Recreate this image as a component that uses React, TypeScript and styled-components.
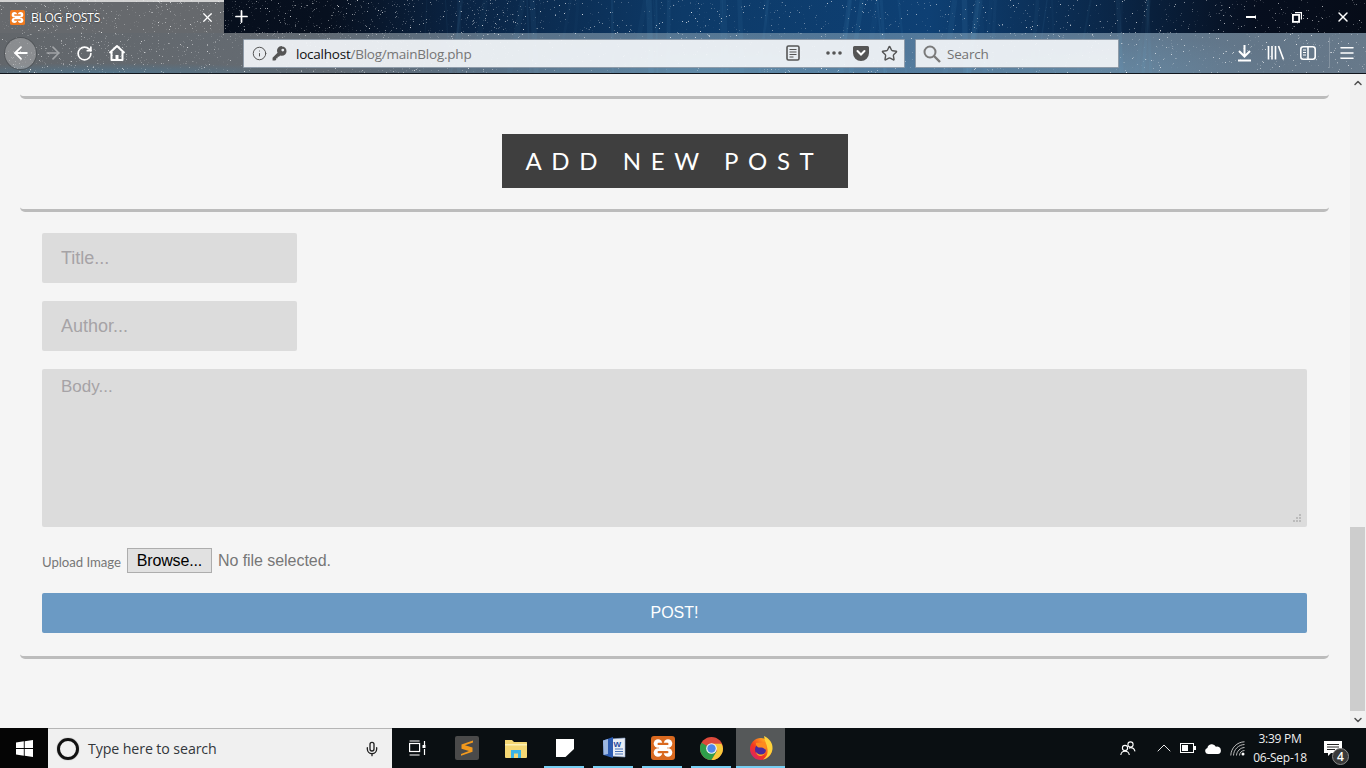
import React, { useMemo } from "react";
import styled, { createGlobalStyle } from "styled-components";
import { ArrowLeft, ArrowRight, RotateCw, X, Plus, Info, Star, Menu, Mic, ChevronUp, ChevronDown } from "lucide-react";

const Global = createGlobalStyle`
  html, body { margin: 0; padding: 0; width: 100%; height: 100%; overflow: hidden; background: #f5f5f5; }
  #root { width: 1366px; height: 768px; }
  * { box-sizing: border-box; }
`;

const Screen = styled.div`
  width: 1366px; height: 768px; display: flex; flex-direction: column; overflow: hidden;
`;
const Frame = styled.header`
  position: relative; height: 74px; flex: none; display: flex; flex-direction: column;
  border-bottom: 1px solid #10151c; overflow: hidden;
  background:
    radial-gradient(ellipse 240px 40px at 700px 74px, rgba(70,160,210,.55), transparent 100%),
    radial-gradient(ellipse 200px 40px at 1090px 74px, rgba(60,140,190,.5), transparent 100%),
    linear-gradient(90deg, #060c18 0%, #07101f 24%, #0a2444 34%, #0d3a68 50%, #0e4074 68%, #0a2545 82%, #060e1e 92%, #060c18 100%);
`;
const TabTint = styled.div`
  position: absolute; left: 0; top: 0; width: 224px; height: 33px; background: #66696d; border-top: 2px solid #d2d2d2;
`;
const ToolbarTint = styled.div`
  position: absolute; left: 0; right: 0; top: 33px; height: 40px;
  background:
    radial-gradient(ellipse 220px 10px at 110px 40px, rgba(70,125,160,.55), transparent 100%),
    linear-gradient(90deg, rgba(102,106,110,.96) 0%, rgba(108,114,120,.92) 18%, rgba(120,142,160,.72) 38%, rgba(135,165,185,.55) 65%, rgba(130,155,175,.72) 85%, rgba(120,140,158,.85) 100%);
`;
const StarSvg = styled.svg`
  position: absolute; inset: 0; width: 1366px; height: 74px; pointer-events: none;
`;
const TabBar = styled.div`
  position: relative; height: 33px; flex: none; display: flex; align-items: stretch;
`;
const Tab = styled.div`
  width: 224px; display: flex; align-items: center; padding: 2px 9px 0 10px; gap: 6px;
  font: 400 12px "Open Sans", sans-serif; color: #fff; letter-spacing: -.25px;
  text-shadow: 0 0 2px rgba(0,0,0,.7);
`;
const TabTitle = styled.span` flex: 1; `;
const NewTab = styled.div`
  width: 34px; display: flex; align-items: center; justify-content: center; color: #fff;
`;
const WinButtons = styled.div` margin-left: auto; display: flex; `;
const WinButton = styled.div`
  width: 46px; display: flex; align-items: center; justify-content: center; color: #fff; padding-top: 1px;
`;
const Toolbar = styled.div`
  position: relative; height: 40px; flex: none; display: flex; align-items: center; padding: 0 0 0 4px;
`;
const BackCircle = styled.div`
  width: 33px; height: 33px; border-radius: 50%; flex: none; color: #fff;
  display: flex; align-items: center; justify-content: center;
  background: rgba(205,205,205,.38); border: 1px solid rgba(50,55,60,.65);
`;
const NavIcon = styled.div<{ $w: number; $dim?: boolean }>`
  width: ${p => p.$w}px; flex: none; display: flex; align-items: center; justify-content: center;
  color: #fff; opacity: ${p => (p.$dim ? 0.4 : 1)};
`;
const UrlBar = styled.div`
  margin-left: 110px; width: 662px; height: 29px; flex: none; display: flex; align-items: center;
  padding: 0 0 0 8px; background: rgba(240,243,246,.94); border: 1px solid rgba(70,90,110,.55); border-radius: 1px;
  color: #555;
`;
const KeyMargin = styled.span` margin-left: 5px; display: flex; `;
const UrlText = styled.span`
  margin-left: 9px; flex: 1; padding-top: 1px; font: 400 13.5px "Open Sans", sans-serif; color: #757575; letter-spacing: -.23px;
`;
const UrlHost = styled.span` color: #111; `;
const UrlAction = styled.div<{ $w: number; $gap?: number }>`
  width: ${p => p.$w}px; margin-right: ${p => p.$gap ?? 0}px; flex: none;
  display: flex; align-items: center; justify-content: center; color: #555;
`;
const SearchBox = styled.div`
  margin-left: 10px; width: 204px; height: 29px; flex: none; display: flex; align-items: center; gap: 6px;
  padding: 1px 0 0 7px; background: rgba(240,243,246,.94); border: 1px solid rgba(70,90,110,.55); border-radius: 1px;
  font: 400 13.5px "Open Sans", sans-serif; color: #737373; letter-spacing: -.2px;
`;
const RightTools = styled.div`
  margin-left: 109px; display: flex; align-items: center; height: 100%; color: #fff;
`;
const ToolDivider = styled.div` width: 1px; height: 30px; background: rgba(255,255,255,.2); margin: 0 0 0 5px; `;

const Viewport = styled.div` flex: 1; min-height: 0; display: flex; background: #f5f5f5; `;
const Page = styled.main`
  flex: 1; min-width: 0; padding: 20px 21px 0 20px; display: flex; flex-direction: column;
`;
const Rule = styled.div`
  height: 5px; flex: none; border-bottom: 3px solid #bcbcbc; border-radius: 0 0 6px 6px;
`;
const Heading = styled.h2`
  margin: 35px auto 19px; width: 346px; height: 54px; flex: none; background: #3f3f3f; color: #fff;
  font: 400 24px Lato, sans-serif; letter-spacing: 9.6px; white-space: nowrap;
  display: flex; align-items: center; padding: 0 0 2px 24px;
`;
const Form = styled.form`
  display: flex; flex-direction: column; padding: 21px 22px 21px;
`;
const field = `
  display: block; background: #dcdcdc; border: 0; border-radius: 2px; outline: 0; color: #333;
  font: 400 18px "Liberation Sans", Arial, sans-serif;
  &::placeholder { color: #a6a3a6; opacity: 1; }
`;
const TextField = styled.input`
  ${field}
  width: 255px; height: 50px; padding: 0 19px; margin-bottom: 18px;
`;
const BodyWrap = styled.div` position: relative; height: 158px; margin-bottom: 21px; `;
const BodyField = styled.textarea`
  ${field}
  font-size: 17px;
  width: 100%; height: 100%; padding: 8px 19px; resize: none;
`;
const Grip = styled.svg` position: absolute; right: 5px; bottom: 4px; `;
const UploadRow = styled.div`
  height: 25px; display: flex; align-items: center; margin-bottom: 20px;
`;
const UploadLabel = styled.label`
  font: 400 13.2px Lato, sans-serif; color: #777; margin: 2px 6px 0 0; letter-spacing: -.05px;
`;
const Browse = styled.button`
  width: 85px; height: 25px; padding: 1px 0 0; background: #e1e1e1; border: 1px solid #adadad; border-radius: 0;
  font: 400 16px "Liberation Sans", Arial, sans-serif; color: #000; letter-spacing: -.15px;
`;
const NoFile = styled.span`
  margin: 1px 0 0 6px; font: 400 16px "Liberation Sans", Arial, sans-serif; color: #777; letter-spacing: -.05px;
`;
const Submit = styled.button`
  height: 40px; width: 100%; border: 0; border-radius: 2px; background: #6b9ac4; color: #fff;
  font: 400 16px "Liberation Sans", Arial, sans-serif;
`;
const Scroll = styled.aside`
  width: 16px; flex: none; background: #f1f1f1; display: flex; flex-direction: column; color: #505050;
`;
const ScrollEnd = styled.div`
  height: 17px; flex: none; display: flex; align-items: center; justify-content: center;
`;
const ScrollTrack = styled.div` flex: 1; display: flex; flex-direction: column; justify-content: flex-end; `;
const ScrollThumb = styled.div` height: 184px; background: #cdcdcd; width: 15px; `;

const Taskbar = styled.footer`
  height: 40px; flex: none; display: flex; align-items: stretch; background: #0a0f12; color: #fff;
`;
const StartBtn = styled.div` width: 48px; display: flex; align-items: center; justify-content: center; background: #050505; `;
const SearchPane = styled.div`
  width: 344px; display: flex; align-items: center; background: #f0f0f0; border-top: 1px solid #b5b5b5; padding: 0 12px 0 9px;
  font: 400 14.2px "Open Sans", sans-serif; color: #33373b; letter-spacing: -.1px;
`;
const Cortana = styled.div`
  width: 22px; height: 22px; border-radius: 50%; border: 3px solid #111; box-shadow: 0 0 1px #555; flex: none; margin-right: 9px;
`;
const SearchHint = styled.span` flex: 1; `;
const TaskView = styled.div` width: 50px; display: flex; align-items: center; justify-content: center; `;
const AppSlot = styled.div<{ $open?: boolean; $active?: boolean; $w?: number }>`
  position: relative; width: ${p => p.$w ?? 49}px; flex: none; display: flex; align-items: center; justify-content: center;
  background: ${p => (p.$active ? "#555859" : "transparent")};
  &::after {
    content: ""; position: absolute; bottom: 0; height: 2px; background: #76cef2;
    display: ${p => (p.$open ? "block" : "none")};
    left: ${p => (p.$active ? 0 : 4)}px; right: ${p => (p.$active ? 0 : 5)}px;
  }
`;
const Tray = styled.div` margin-left: auto; display: flex; align-items: center; padding-right: 10px; `;
const TrayIcon = styled.div<{ $w: number }>` width: ${p => p.$w}px; flex: none; display: flex; align-items: center; justify-content: center; `;
const Clock = styled.div`
  width: 60px; text-align: center; white-space: nowrap; font: 400 12px/19px "Open Sans", sans-serif; color: #eee; letter-spacing: -.25px;
`;
const Notify = styled.div` position: relative; width: 46px; display: flex; align-items: center; justify-content: center; `;
const Badge = styled.span`
  position: absolute; left: 22px; top: 7px; width: 17px; height: 17px; border-radius: 50%; background: #3a3a3a;
  border: 1px solid #8a8a8a; font: 600 12px/15px "Open Sans", sans-serif; text-align: center; color: #fff;
`;

function Stars() {
  const { rects, streaks } = useMemo(() => {
    let s = 12345;
    const r = () => (s = (s * 16807) % 2147483647) / 2147483647;
    const rects: React.ReactElement[] = [];
    for (let i = 0; i < 3000; i++) {
      const x = Math.floor(r() * 1366), y = Math.floor(r() * 74), o = r() * r() * 0.85;
      rects.push(<rect key={i} x={x} y={y} width={1} height={1} fill="#fff" opacity={o} />);
    }
    for (let i = 0; i < 1400; i++) {
      const x = Math.floor(r() * 520), y = Math.floor(r() * 73), o = r() * r() * 0.6;
      rects.push(<rect key={`g${i}`} x={x} y={y} width={1} height={1} fill="#fff" opacity={o} />);
    }
    const streaks: React.ReactElement[] = [];
    for (let i = 0; i < 46; i++) {
      const x = 420 + r() * 760, dx = -14 + r() * 22, w = 1 + r() * 5, o = 0.02 + r() * 0.06;
      streaks.push(<line key={i} x1={x} y1={0} x2={x + dx} y2={74} stroke="#6fc0ee" strokeWidth={w} opacity={o} />);
    }
    return { rects, streaks };
  }, []);
  return <StarSvg>{streaks}{rects}</StarSvg>;
}

const XamppGlyph = ({ size, radius = 3, bg = "#f07a1e" }: { size: number; radius?: number; bg?: string }) => (
  <svg width={size} height={size} viewBox="0 0 24 24">
    <rect width="24" height="24" rx={radius} fill={bg} />
    <g fill="#fff">
      <circle cx="7" cy="7.500" r="4.300" /><circle cx="17" cy="7.500" r="4.300" />
      <circle cx="7" cy="16.500" r="4.300" /><circle cx="17" cy="16.500" r="4.300" />
      <rect x="8" y="7" width="8" height="10" />
    </g>
    <rect x="6.500" y="6.700" width="11" height="2.400" rx="1.200" fill={bg} />
    <rect x="6.500" y="14.900" width="11" height="2.400" rx="1.200" fill={bg} />
  </svg>
);

const Home = () => (
  <svg width="18" height="18" viewBox="0 0 18 18" fill="none" stroke="#fff" strokeWidth="2" strokeLinejoin="round">
    <path d="M1.500 9 9 2l7.500 7" /><path d="M3.500 8v8h11V8" /><rect x="7.500" y="11" width="3" height="5" fill="#fff" stroke="none" />
  </svg>
);
const KeyIcon = () => (
  <svg width="15" height="15" viewBox="0 0 16 16" fill="#555">
    <path d="M10.500 0.500a5 5 0 0 1 0 10c-.7 0-1.300-.1-1.900-.4L7.500 11.500H6v1.500H4.500v1.500l-1 1H.6v-2.900l5.300-5.300a5 5 0 0 1 4.600-7.300Zm1 2.300a1.500 1.500 0 1 0 0 3 1.500 1.500 0 0 0 0-3Z" />
  </svg>
);
const ReaderIcon = () => (
  <svg width="14" height="16" viewBox="0 0 14 16" fill="none" stroke="#555" strokeWidth="1.600">
    <rect x="1" y="1" width="12" height="14" rx="1.500" /><path d="M3.500 4.500h7M3.500 7h7M3.500 9.500h7M3.500 12h4" strokeWidth="1.200" />
  </svg>
);
const Dots = () => (
  <svg width="16" height="4" viewBox="0 0 16 4" fill="#555"><circle cx="2" cy="2" r="1.800" /><circle cx="8" cy="2" r="1.800" /><circle cx="14" cy="2" r="1.800" /></svg>
);
const Pocket = () => (
  <svg width="16" height="15" viewBox="0 0 16 15">
    <path d="M1.500 0h13A1.500 1.500 0 0 1 16 1.500V7A8 8 0 0 1 0 7V1.500A1.500 1.500 0 0 1 1.500 0Z" fill="#555" />
    <path d="M4.500 5 8 8.500 11.500 5" fill="none" stroke="#fff" strokeWidth="2" strokeLinecap="round" />
  </svg>
);
const Magnifier = () => (
  <svg width="18" height="18" viewBox="0 0 18 18" fill="none" stroke="#7a7a7a" strokeWidth="2">
    <circle cx="7" cy="7" r="5.500" /><path d="m11 11 6 6" strokeWidth="2.400" />
  </svg>
);
const DownloadIcon = () => (
  <svg width="15" height="18" viewBox="0 0 15 18" fill="none" stroke="#fff" strokeWidth="2">
    <path d="M7.500 1v11M2 7l5.500 5.500L13 7M1 16.500h13" />
  </svg>
);
const LibraryIcon = () => (
  <svg width="18" height="16" viewBox="0 0 18 16" fill="none" stroke="#fff" strokeWidth="1.600">
    <path d="M1.500 1v13.500M5 1v13.500M8.500 1v13.500M11.500 1l5 13.500" />
  </svg>
);
const SidebarIcon = () => (
  <svg width="16" height="14" viewBox="0 0 16 14" fill="none" stroke="#fff" strokeWidth="1.600">
    <rect x=".8" y=".8" width="14.400" height="12.400" rx="2.500" /><path d="M8 1v12" />
    <path d="M3 4h3M3 6.500h3M3 9h3" strokeWidth="1.100" />
  </svg>
);
const Restore = () => (
  <svg width="10" height="11" viewBox="0 0 10 11" fill="none" stroke="#fff"><rect x=".9" y="2.900" width="6.200" height="7" strokeWidth="1.800" /><path d="M3 .6h6.400v7" strokeWidth="1.200" /></svg>
);
const Minimize = () => <svg width="10" height="2" viewBox="0 0 10 2"><rect width="10" height="2" fill="#fff" /></svg>;
const Windows = () => (
  <svg width="17" height="17" viewBox="0 0 17 17" fill="#fff"><path d="M0 2.400 7.800 1.300V8H0ZM8.700 1.200 17 0v8H8.700ZM0 9h7.800v6.700L0 14.600ZM8.700 9H17v8l-8.300-1.200Z" /></svg>
);
const TaskViewIcon = () => (
  <svg width="17" height="16" viewBox="0 0 17 16" fill="none" stroke="#fff" strokeWidth="1.200">
    <rect x=".6" y="3.500" width="10" height="8" /><path d="M.6 1h10M.6 15h10M15.500 1v4M15.500 9v6" /><rect x="13.500" y="5" width="3" height="3" fill="#fff" stroke="none" />
  </svg>
);
const Sublime = () => (
  <svg width="24" height="24" viewBox="0 0 24 24">
    <rect width="24" height="24" rx="2" fill="#4a4a4a" />
    <path d="M18 4.500 6.500 8.500v4.200L14 15l-8 3v1.800l11.500-4v-4.300L10 9.300l8-2.800Z" fill="#f39a1d" />
  </svg>
);
const Explorer = () => (
  <svg width="22" height="19" viewBox="0 0 22 19">
    <path d="M0 1h7l2 2h12.500a.5.500 0 0 1 .5.500V18a1 1 0 0 1-1 1H1a1 1 0 0 1-1-1Z" fill="#f4d774" />
    <path d="M0 5h22v1.500H0Z" fill="#fdf0b5" />
    <path d="M6 11h10v8h-3v-4.500H9V19H6Z" fill="#3ab3e6" />
  </svg>
);
const Sticky = () => (
  <svg width="18" height="18" viewBox="0 0 18 18"><rect width="18" height="18" fill="#fff" /><path d="M18 10V18H9.500Z" fill="#0a0f12" /></svg>
);
const Word = () => (
  <svg width="24" height="24" viewBox="0 0 24 24">
    <path d="M8 3 23 2v19L8 20Z" fill="#e9eef6" stroke="#8da6cf" strokeWidth=".6" />
    <path d="M13 13h8M13 15.500h8M13 18h8" stroke="#4a74b8" strokeWidth="1" />
    <path d="M1 4.500 11 1v21L1.500 19Z" fill="#2c5bb0" />
    <path d="M1 4.500 6 3v15l-4.500 1Z" fill="#9db8e2" />
    <text x="11.500" y="11" fontFamily="Liberation Sans, sans-serif" fontWeight="700" fontSize="8" fill="#1e4aa0">W</text>
  </svg>
);
const ChromeLogo = () => (
  <svg width="23" height="23" viewBox="0 0 24 24">
    <circle cx="12" cy="12" r="12" fill="#dd4a3c" />
    <path d="M12 12 1.600 6A12 12 0 0 0 12 24l5.500-9Z" fill="#2f9d4a" />
    <path d="M12 7h10.400A12 12 0 0 1 24 12a12 12 0 0 1-12 12l6-10Z" fill="#f6c93b" />
    <circle cx="12" cy="12" r="5.600" fill="#f4f4f4" /><circle cx="12" cy="12" r="4.400" fill="#4e88ea" />
  </svg>
);
const Firefox = () => (
  <svg width="24" height="24" viewBox="0 0 24 24">
    <defs>
      <linearGradient id="ffg" x1="0" y1="1" x2="1" y2="0"><stop offset="0" stopColor="#d01a86" /><stop offset=".4" stopColor="#f3361f" /><stop offset=".75" stopColor="#ff9a1f" /><stop offset="1" stopColor="#ffc62a" /></linearGradient>
    </defs>
    <circle cx="12" cy="13" r="11" fill="url(#ffg)" />
    <path d="M15 0c5.500 2.500 9 7 8.500 13-.5 5-4.500 9.500-9.500 10.500 4.500-3 5-7 4.500-10.500C18 8.500 15.500 5 15 0Z" fill="#ffd23a" />
    <circle cx="11.500" cy="13.500" r="5.500" fill="#4a2a9c" />
    <path d="M7 7c2.500-1 5 1 8.500-1.500 2 2 2.500 5.500 1 8.500-1-2.500-4.500-2.500-6.500-2.500C8.500 11.500 6.500 9 7 7Z" fill="#ff8a1e" />
    <path d="M7 16c2 3 6 3.500 9 1-2 4-8 4-9-1Z" fill="#ffad1f" />
  </svg>
);
const People = () => (
  <svg width="16" height="15" viewBox="0 0 16 15" fill="none" stroke="#fff" strokeWidth="1.100">
    <circle cx="10.500" cy="3.500" r="2.600" /><circle cx="5" cy="7" r="2.600" /><path d="M.8 14c.3-2.500 2-3.800 4.200-3.800S9 11.500 9.300 14M9 7.300c.5-.5 1-.7 1.500-.7 2.300 0 4 1.300 4.500 3.800" />
  </svg>
);
const Battery = () => (
  <svg width="16" height="10" viewBox="0 0 16 10"><rect x=".5" y=".5" width="13" height="9" fill="none" stroke="#fff" /><rect x="2" y="2" width="6" height="6" fill="#fff" /><rect x="14" y="3" width="2" height="4" fill="#fff" /></svg>
);
const Cloud = () => (
  <svg width="17" height="11" viewBox="0 0 17 11" fill="#fff"><path d="M4 11a3 3 0 0 1-.6-5.900 4.500 4.500 0 0 1 8.500-1.300 3.800 3.800 0 0 1 5 3.700c0 2-1 3.500-3 3.500Z" /></svg>
);
const Wifi = () => (
  <svg width="15" height="15" viewBox="0 0 15 15" fill="none" stroke="#bbb" strokeWidth="1">
    <path d="M.8 14.500C1 7 7 1 14.500 .8" /><path d="M3.500 14.500C3.700 8.500 8.500 3.700 14.500 3.500" /><path d="M6.500 14.500C6.700 10.300 10.300 6.700 14.500 6.500" /><path d="M9.500 14.500c0-2.800 2.200-5 5-5" /><circle cx="13" cy="13" r="1.500" fill="#fff" stroke="none" />
  </svg>
);
const NotifyIcon = () => (
  <svg width="18" height="15" viewBox="0 0 18 15"><path d="M0 0h18v12H7l-3 3v-3H0Z" fill="#fff" /><path d="M3 3.500h12M3 6h12M3 8.500h8" stroke="#222" strokeWidth="1" /></svg>
);

export default function App() {
  return (
    <Screen>
      <Global />
      <Frame>
        <TabTint />
        <ToolbarTint />
        <Stars />
        <TabBar>
          <Tab>
            <XamppGlyph size={15} />
            <TabTitle>BLOG POSTS</TabTitle>
            <X size={15} strokeWidth={2} />
          </Tab>
          <NewTab><Plus size={19} strokeWidth={2.2} /></NewTab>
          <WinButtons>
            <WinButton><Minimize /></WinButton>
            <WinButton><Restore /></WinButton>
            <WinButton><X size={16} strokeWidth={2.2} /></WinButton>
          </WinButtons>
        </TabBar>
        <Toolbar>
          <BackCircle><ArrowLeft size={20} strokeWidth={2.2} /></BackCircle>
          <NavIcon $w={32} $dim><ArrowRight size={20} strokeWidth={2} /></NavIcon>
          <NavIcon $w={31}><RotateCw size={17} strokeWidth={2.4} /></NavIcon>
          <NavIcon $w={33}><Home /></NavIcon>
          <UrlBar>
            <Info size={15} strokeWidth={1.6} />
            <KeyMargin><KeyIcon /></KeyMargin>
            <UrlText><UrlHost>localhost</UrlHost>/Blog/mainBlog.php</UrlText>
            <UrlAction $w={30} $gap={12}><ReaderIcon /></UrlAction>
            <UrlAction $w={28}><Dots /></UrlAction>
            <UrlAction $w={26}><Pocket /></UrlAction>
            <UrlAction $w={30}><Star size={17} strokeWidth={2} /></UrlAction>
          </UrlBar>
          <SearchBox>
            <Magnifier />
            Search
          </SearchBox>
          <RightTools>
            <NavIcon $w={32}><DownloadIcon /></NavIcon>
            <NavIcon $w={32}><LibraryIcon /></NavIcon>
            <NavIcon $w={32}><SidebarIcon /></NavIcon>
            <ToolDivider />
            <NavIcon $w={34}><Menu size={18} strokeWidth={2} /></NavIcon>
          </RightTools>
        </Toolbar>
      </Frame>
      <Viewport>
        <Page>
          <Rule />
          <Heading>ADD NEW POST</Heading>
          <Rule />
          <Form>
            <TextField placeholder="Title..." />
            <TextField placeholder="Author..." />
            <BodyWrap>
              <BodyField placeholder="Body..." />
              <Grip width="9" height="9" viewBox="0 0 9 9" fill="#bbb">
                <rect x="6" y="0" width="2" height="2" /><rect x="3" y="3" width="2" height="2" /><rect x="6" y="3" width="2" height="2" />
                <rect x="0" y="6" width="2" height="2" /><rect x="3" y="6" width="2" height="2" /><rect x="6" y="6" width="2" height="2" />
              </Grip>
            </BodyWrap>
            <UploadRow>
              <UploadLabel>Upload Image</UploadLabel>
              <Browse type="button">Browse...</Browse>
              <NoFile>No file selected.</NoFile>
            </UploadRow>
            <Submit type="button">POST!</Submit>
          </Form>
          <Rule />
        </Page>
        <Scroll>
          <ScrollEnd><ChevronUp size={12} strokeWidth={3} /></ScrollEnd>
          <ScrollTrack><ScrollThumb /></ScrollTrack>
          <ScrollEnd><ChevronDown size={12} strokeWidth={3} /></ScrollEnd>
        </Scroll>
      </Viewport>
      <Taskbar>
        <StartBtn><Windows /></StartBtn>
        <SearchPane>
          <Cortana />
          <SearchHint>Type here to search</SearchHint>
          <Mic size={16} strokeWidth={2} color="#222" />
        </SearchPane>
        <TaskView><TaskViewIcon /></TaskView>
        <AppSlot><Sublime /></AppSlot>
        <AppSlot><Explorer /></AppSlot>
        <AppSlot $open><Sticky /></AppSlot>
        <AppSlot $open><Word /></AppSlot>
        <AppSlot $open><XamppGlyph size={24} radius={3} bg="#d9691f" /></AppSlot>
        <AppSlot $open><ChromeLogo /></AppSlot>
        <AppSlot $open $active $w={49}><Firefox /></AppSlot>
        <Tray>
          <TrayIcon $w={48}><People /></TrayIcon>
          <TrayIcon $w={24}><ChevronUp size={26} strokeWidth={0.9} color="#fff" /></TrayIcon>
          <TrayIcon $w={24}><Battery /></TrayIcon>
          <TrayIcon $w={24}><Cloud /></TrayIcon>
          <TrayIcon $w={26}><Wifi /></TrayIcon>
          <Clock>3:39 PM<br />06-Sep-18</Clock>
          <Notify><NotifyIcon /><Badge>4</Badge></Notify>
        </Tray>
      </Taskbar>
    </Screen>
  );
}
